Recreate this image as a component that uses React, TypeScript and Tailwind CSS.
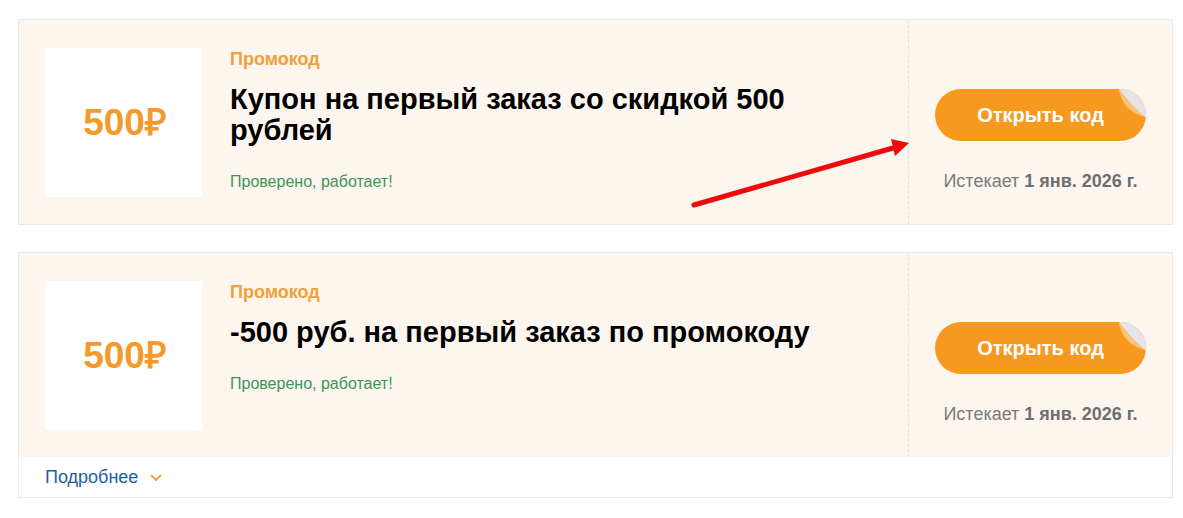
import React from "react";

/**
 * Promo code list — two coupon cards with a "reveal code" button,
 * plus a red hint arrow pointing at the first card's code column.
 */

type Coupon = {
  amount: string;
  title: string;
  expires: string;
  footer?: boolean;
};

const coupons: Coupon[] = [
  {
    amount: "500₽",
    title: "Купон на первый заказ со скидкой 500 рублей",
    expires: "1 янв. 2026 г.",
  },
  {
    amount: "500₽",
    title: "-500 руб. на первый заказ по промокоду",
    expires: "1 янв. 2026 г.",
    footer: true,
  },
];

function PeelCorner() {
  // folded sticker corner; the button's rounded clip trims the outside
  return (
    <svg
      className="pointer-events-none absolute right-0 top-0"
      width="30"
      height="30"
      viewBox="0 0 30 30"
    >
      <path d="M3 0 H30 V29 Q13 15 3 0 Z" fill="#e4e4ea" />
      <path d="M3 0 Q13 15 29 28 Q6 22 3 0 Z" fill="#fbc27a" />
    </svg>
  );
}

function CouponCard({ coupon }: { coupon: Coupon }) {
  return (
    <div className="border border-[#e9e9e9] bg-white">
      <div className="flex bg-[#fdf6ee]">
        {/* ---- left: amount tile + copy ---- */}
        <div className="flex flex-1 pb-[27px] pl-[26px] pt-[28px]">
          <div className="flex h-[149px] w-[157px] shrink-0 items-center justify-center bg-white">
            <span className="pl-[3px] text-[37px] font-bold text-[#f39a2b]">
              {coupon.amount}
            </span>
          </div>
          <div className="ml-[28px] flex max-w-[600px] flex-col">
            <span className="text-[18px] font-bold leading-[22px] text-[#f0a03c]">
              Промокод
            </span>
            <h3 className="mt-[14px] text-[29px] font-bold leading-[31px] text-black">
              {coupon.title}
            </h3>
            <span className="mt-[27px] text-[16px] leading-[18px] text-[#3b9558]">
              Проверено, работает!
            </span>
          </div>
        </div>

        {/* ---- right: reveal button + expiry ---- */}
        <div className="flex w-[264px] shrink-0 flex-col items-center border-l border-dashed border-[#e2e2e2] pt-[69px]">
          <button className="relative h-[52px] w-[211px] overflow-hidden rounded-full bg-[#f7991f] text-[20px] font-bold text-white">
            Открыть код
            <PeelCorner />
          </button>
          <p className="mt-[31px] text-[18px] leading-[18px] text-[#7a7a7a]">
            Истекает <span className="font-bold text-[#6e6e6e]">{coupon.expires}</span>
          </p>
        </div>
      </div>

      {coupon.footer && (
        <div className="flex h-[40px] items-center gap-[12px] pl-[26px]">
          <span className="text-[18px] text-[#1b5fa5]">Подробнее</span>
          <svg width="12" height="8" viewBox="0 0 12 8" className="mt-[2px]">
            <path
              d="M1.5 1.5 L6 6 L10.5 1.5"
              fill="none"
              stroke="#f0a03c"
              strokeWidth="1.8"
              strokeLinecap="round"
              strokeLinejoin="round"
            />
          </svg>
        </div>
      )}
    </div>
  );
}

export default function App() {
  return (
    <div
      className="relative h-[518px] w-[1183px] bg-white pl-[18px] pt-[19px]"
      style={{ fontFamily: '"Liberation Sans", Arial, sans-serif' }}
    >
      <div className="flex w-[1155px] flex-col gap-[27px]">
        {coupons.map((c, i) => (
          <CouponCard key={i} coupon={c} />
        ))}
      </div>

      {/* red hint arrow */}
      <svg
        className="pointer-events-none absolute left-0 top-0"
        width="1183"
        height="518"
        viewBox="0 0 1183 518"
      >
        <line
          x1="694"
          y1="205"
          x2="893"
          y2="148"
          stroke="#ee0a0a"
          strokeWidth="5"
          strokeLinecap="round"
        />
        <polygon points="909,143 891,139 895,156" fill="#ee0a0a" />
      </svg>
    </div>
  );
}
